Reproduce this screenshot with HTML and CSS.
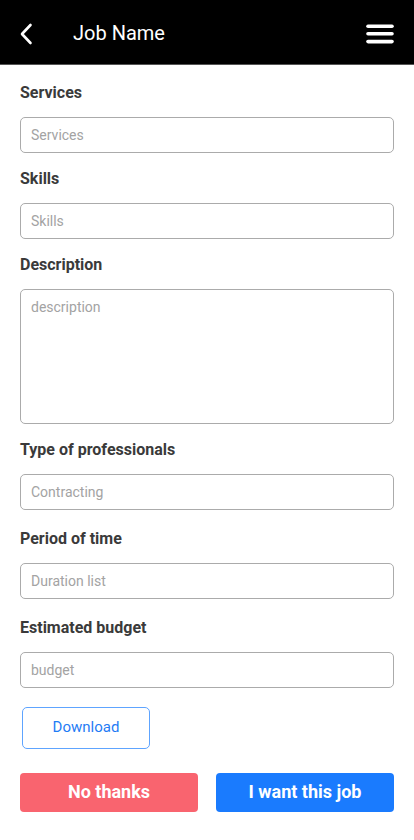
FILE: index.html
```html
<!DOCTYPE html>
<html lang="en">
<head>
<meta charset="utf-8">
<title>Job Name</title>
<link rel="stylesheet" href="styles.css">
</head>
<body>
<header class="topbar">
  <button class="icon-btn back" aria-label="Back">
    <svg width="14" height="22" viewBox="0 0 14 22"><path d="M11.5 2 L3 11 L11.5 20" fill="none" stroke="#fff" stroke-width="2.6" stroke-linecap="round" stroke-linejoin="round"/></svg>
  </button>
  <h1 class="title">Job Name</h1>
  <button class="icon-btn menu" aria-label="Menu">
    <svg width="28" height="20" viewBox="0 0 28 20"><g stroke="#fff" stroke-width="3.6" stroke-linecap="round"><line x1="2" y1="2.2" x2="26" y2="2.2"/><line x1="2" y1="9.8" x2="26" y2="9.8"/><line x1="2" y1="17.6" x2="26" y2="17.6"/></g></svg>
  </button>
</header>
<main class="form">
  <div class="group">
    <label class="label">Services</label>
    <input class="field" type="text" placeholder="Services">
  </div>
  <div class="group">
    <label class="label">Skills</label>
    <input class="field" type="text" placeholder="Skills">
  </div>
  <div class="group">
    <label class="label">Description</label>
    <textarea class="field area" placeholder="description"></textarea>
  </div>
  <div class="group wide">
    <label class="label">Type of professionals</label>
    <input class="field" type="text" placeholder="Contracting">
  </div>
  <div class="group wide">
    <label class="label">Period of time</label>
    <input class="field" type="text" placeholder="Duration list">
  </div>
  <div class="group wide">
    <label class="label">Estimated budget</label>
    <input class="field" type="text" placeholder="budget">
  </div>
  <button class="download">Download</button>
  <div class="actions">
    <button class="btn decline">No thanks</button>
    <button class="btn accept">I want this job</button>
  </div>
</main>
</body>
</html>
```
FILE: styles.css
```css
* { box-sizing: border-box; }
html, body { margin: 0; padding: 0; background: #fff; }
body { font-family: Roboto, "Liberation Sans", Arial, sans-serif; color: #3a3a3a; }

.topbar {
  height: 65px;
  background: #000;
  border-bottom: 1px solid #555;
  display: flex;
  align-items: center;
  padding: 0 20px 0 19px;
}
.icon-btn {
  background: none;
  border: 0;
  padding: 0;
  display: flex;
  align-items: center;
  cursor: pointer;
}
.back { margin-top: 3px; }
.title {
  margin: 2px 0 0 40px;
  font-size: 20px;
  font-weight: 400;
  color: #fff;
  flex: 1;
  line-height: 24px;
}
.menu { margin-top: 3px; }

.form {
  padding: 18px 20px 0 20px;
  display: flex;
  flex-direction: column;
}
.group {
  display: flex;
  flex-direction: column;
  margin-bottom: 16px;
}
.group.wide { margin-bottom: 19px; }
.label {
  font-size: 16px;
  line-height: 20px;
  font-weight: 700;
  color: #3a3a3a;
  margin-bottom: 14px;
}
.field {
  height: 36px;
  width: 100%;
  border: 1px solid #ababab;
  border-radius: 5px;
  padding: 0 10px;
  font-family: inherit;
  font-size: 14px;
  color: #333;
  background: #fff;
  outline: none;
}
.field::placeholder { color: #a3a3a3; }
.area {
  height: 135px;
  padding: 7px 10px;
  line-height: 20px;
  resize: none;
}
.download {
  align-self: flex-start;
  margin-left: 2px;
  width: 128px;
  height: 42px;
  border: 1px solid #5ea4ff;
  border-radius: 5px;
  background: #fff;
  color: #1f7cf5;
  font-family: inherit;
  font-size: 15px;
  font-weight: 400;
  padding: 0 0 2px;
}
.actions {
  margin-top: 24px;
  display: flex;
  gap: 18px;
}
.btn {
  flex: 1;
  height: 39px;
  border: 0;
  border-radius: 4px;
  font-family: inherit;
  font-size: 18px;
  font-weight: 700;
  color: #fff;
  padding: 0 0 2px;
}
.decline { background: #f9646f; }
.accept { background: #1a7bfe; }
```
